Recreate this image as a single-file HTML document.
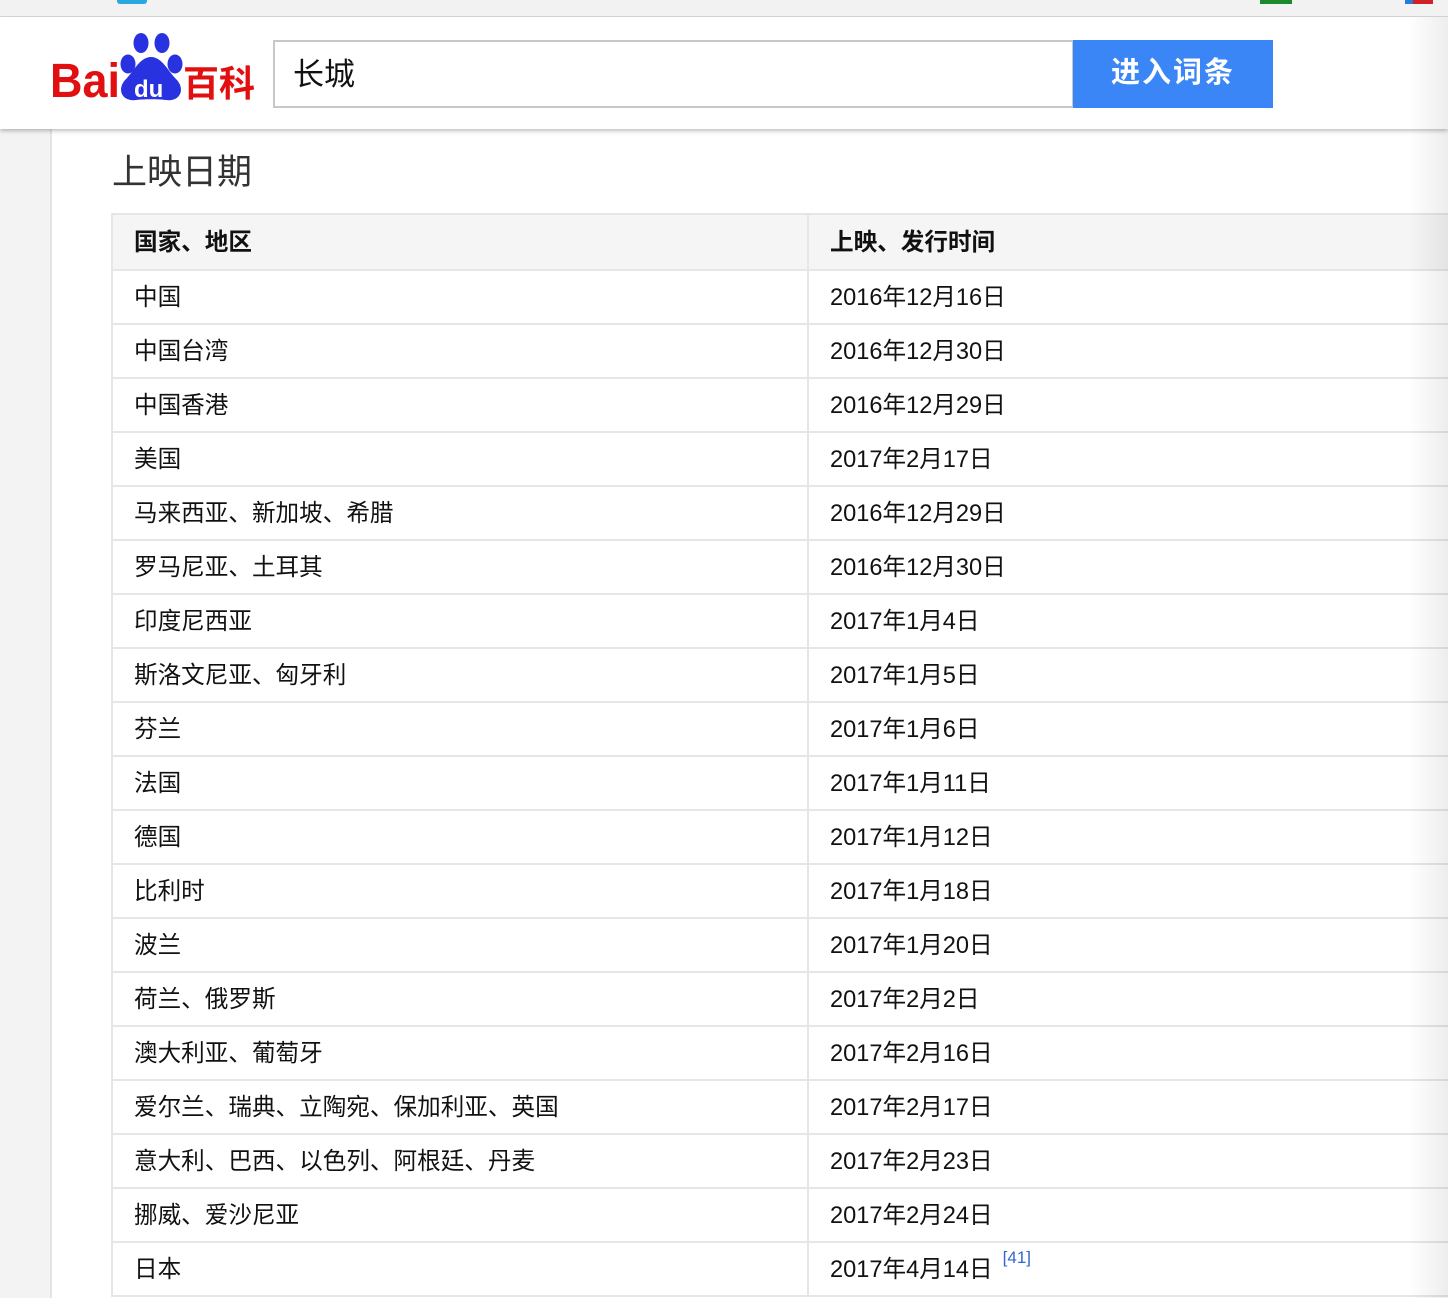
<!DOCTYPE html>
<html><head><meta charset="utf-8">
<style>
*{margin:0;padding:0;box-sizing:border-box}
body{width:1448px;height:1298px;overflow:hidden;background:#fff;font-family:"Liberation Sans","Noto Sans CJK SC",sans-serif;position:relative}
.top{position:absolute;left:0;top:0;width:1448px;height:17px;background:#f2f2f2;border-bottom:1px solid #d8d8d8}
.side{position:absolute;left:0;top:17px;width:52px;height:1281px;background:#f3f3f3;border-right:2px solid #e4e4e4}
.hdr{position:absolute;left:0;top:17px;width:1448px;height:112px;background:#fff;box-shadow:0 2px 4px rgba(0,0,0,.25);z-index:2}
.logo{position:absolute;left:50px;top:14px;width:210px;height:70px}
.search{position:absolute;left:273px;top:23px;width:801px;height:68px;border:2px solid #c8c8c8;font-size:31px;line-height:66px;padding-left:18px;color:#111}
.btn{position:absolute;left:1073px;top:23px;width:200px;height:68px;background:#3a86f7;color:#fff;font-size:29px;font-weight:bold;text-align:center;line-height:66px;letter-spacing:2px}
h2{position:absolute;left:112px;top:144px;font-size:35px;font-weight:normal;color:#333}
table{position:absolute;left:111px;top:213px;width:1400px;border-collapse:collapse}
td{height:54px;border:2px solid #e6e6e6;font-size:23.6px;color:#111;padding-left:21px;vertical-align:middle;padding-bottom:5px}
td:first-child{width:696px}
tr.h td{background:#f5f5f5;font-weight:bold;height:56px}
sup{color:#3366cc;font-size:17px;vertical-align:top;position:relative;top:-2px;margin-left:10px}
.shade{position:absolute;right:0;top:17px;width:40px;height:1281px;background:linear-gradient(to right,rgba(0,0,0,0),rgba(0,0,0,.07));z-index:3}
</style></head><body>
<div class="top">
<div style="position:absolute;left:117px;top:0;width:30px;height:4px;background:#29a8e0;border-radius:0 0 3px 3px"></div>
<div style="position:absolute;left:1260px;top:0;width:32px;height:4px;background:#1a8a2a"></div>
<div style="position:absolute;left:1405px;top:0;width:8px;height:4px;background:#2a7ad8"></div>
<div style="position:absolute;left:1413px;top:0;width:20px;height:4px;background:#d0202a"></div>
</div>
<div class="side"></div>
<div class="hdr">
<svg class="logo" viewBox="0 0 210 70">
<text x="0" y="66" font-family="Liberation Sans" font-weight="bold" font-size="48" fill="#e10f0f" textLength="70" lengthAdjust="spacingAndGlyphs">Bai</text>
<ellipse cx="91" cy="12" rx="7.5" ry="10" fill="#2932e1"/>
<ellipse cx="112" cy="12" rx="7.5" ry="10" fill="#2932e1"/>
<ellipse cx="78" cy="33" rx="7.5" ry="9.5" fill="#2932e1"/>
<ellipse cx="125" cy="33" rx="7.5" ry="9.5" fill="#2932e1"/>
<path d="M101 26 C90 26 84 40 76 48 C66 58 72 71 86 69 C94 68 108 68 116 69 C130 71 136 58 126 48 C118 40 112 26 101 26Z" fill="#2932e1"/>
<text x="84" y="66" font-family="Liberation Sans" font-weight="bold" font-size="24" fill="#fff">du</text>
<text x="133" y="65" font-family="Noto Sans CJK SC" font-weight="bold" font-size="36" fill="#e10f0f" textLength="72" lengthAdjust="spacingAndGlyphs">百科</text>
</svg>
<div class="search">长城</div>
<div class="btn">进入词条</div>
</div>
<h2>上映日期</h2>
<table>
<tr class="h"><td>国家、地区</td><td>上映、发行时间</td></tr>
<tr><td>中国</td><td>2016年12月16日</td></tr>
<tr><td>中国台湾</td><td>2016年12月30日</td></tr>
<tr><td>中国香港</td><td>2016年12月29日</td></tr>
<tr><td>美国</td><td>2017年2月17日</td></tr>
<tr><td>马来西亚、新加坡、希腊</td><td>2016年12月29日</td></tr>
<tr><td>罗马尼亚、土耳其</td><td>2016年12月30日</td></tr>
<tr><td>印度尼西亚</td><td>2017年1月4日</td></tr>
<tr><td>斯洛文尼亚、匈牙利</td><td>2017年1月5日</td></tr>
<tr><td>芬兰</td><td>2017年1月6日</td></tr>
<tr><td>法国</td><td>2017年1月11日</td></tr>
<tr><td>德国</td><td>2017年1月12日</td></tr>
<tr><td>比利时</td><td>2017年1月18日</td></tr>
<tr><td>波兰</td><td>2017年1月20日</td></tr>
<tr><td>荷兰、俄罗斯</td><td>2017年2月2日</td></tr>
<tr><td>澳大利亚、葡萄牙</td><td>2017年2月16日</td></tr>
<tr><td>爱尔兰、瑞典、立陶宛、保加利亚、英国</td><td>2017年2月17日</td></tr>
<tr><td>意大利、巴西、以色列、阿根廷、丹麦</td><td>2017年2月23日</td></tr>
<tr><td>挪威、爱沙尼亚</td><td>2017年2月24日</td></tr>
<tr><td>日本</td><td>2017年4月14日<sup>[41]</sup></td></tr>
</table>
<div class="shade"></div>
</body></html>
